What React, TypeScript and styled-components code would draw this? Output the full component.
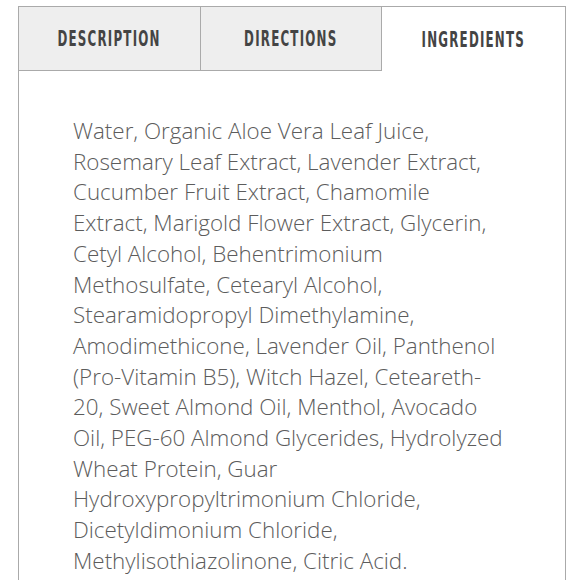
import React, { ReactElement, useState } from 'react';
import styled, { createGlobalStyle } from 'styled-components';

const GlobalStyle = createGlobalStyle`
  html, body {
    margin: 0;
    padding: 0;
    background: #ffffff;
  }
`;

const Page = styled.div`
  width: 580px;
  height: 580px;
  overflow: hidden;
  padding: 6px 0 0 18px;
  box-sizing: border-box;
  background: #ffffff;
`;

const Panel = styled.div`
  display: flex;
  flex-direction: column;
  width: 548px;
  height: 600px;
  border: 1px solid #aaaaaa;
  border-bottom: none;
  box-sizing: border-box;
`;

const TabBar = styled.div`
  display: grid;
  grid-template-columns: 182px 181px 183px;
  height: 64px;
`;

const Tab = styled.button<{ $active: boolean }>`
  display: flex;
  align-items: center;
  justify-content: center;
  margin: 0;
  padding: 0;
  border: none;
  border-right: ${(p) => (p.$active ? 'none' : '1px solid #aaaaaa')};
  border-bottom: ${(p) => (p.$active ? 'none' : '1px solid #aaaaaa')};
  background: ${(p) => (p.$active ? '#ffffff' : '#eeeeee')};
  cursor: pointer;
`;

const TabLabel = styled.span`
  display: inline-block;
  color: #444444;
  font-family: 'DejaVu Sans Condensed', 'DejaVu Sans', sans-serif;
  font-weight: bold;
  font-size: 22px;
  letter-spacing: 2px;
  transform: scaleX(0.6);
  white-space: nowrap;
`;

const Body = styled.div`
  padding: 45px 20px 0 54px;
`;

const Ingredients = styled.p`
  margin: 0;
  font-family: 'Open Sans', sans-serif;
  font-weight: 300;
  font-size: 22.4px;
  line-height: 30.7px;
  color: #5c5c5c;
  white-space: pre-line;
`;

type TabKey = 'DESCRIPTION' | 'DIRECTIONS' | 'INGREDIENTS';

const TABS: TabKey[] = ['DESCRIPTION', 'DIRECTIONS', 'INGREDIENTS'];

const INGREDIENT_LINES = [
  'Water, Organic Aloe Vera Leaf Juice,',
  'Rosemary Leaf Extract, Lavender Extract,',
  'Cucumber Fruit Extract, Chamomile',
  'Extract, Marigold Flower Extract, Glycerin,',
  'Cetyl Alcohol, Behentrimonium',
  'Methosulfate, Cetearyl Alcohol,',
  'Stearamidopropyl Dimethylamine,',
  'Amodimethicone, Lavender Oil, Panthenol',
  '(Pro-Vitamin B5), Witch Hazel, Ceteareth-',
  '20, Sweet Almond Oil, Menthol, Avocado',
  'Oil, PEG-60 Almond Glycerides, Hydrolyzed',
  'Wheat Protein, Guar',
  'Hydroxypropyltrimonium Chloride,',
  'Dicetyldimonium Chloride,',
  'Methylisothiazolinone, Citric Acid.',
];

function App(): ReactElement {
  const [selected, setSelected] = useState<TabKey>('INGREDIENTS');

  return (
    <Page>
      <GlobalStyle />
      <Panel>
        <TabBar>
          {TABS.map((key) => (
            <Tab key={key} $active={selected === key} onClick={(): void => setSelected(key)}>
              <TabLabel>{key}</TabLabel>
            </Tab>
          ))}
        </TabBar>
        <Body>
          <Ingredients>{INGREDIENT_LINES.join('\n')}</Ingredients>
        </Body>
      </Panel>
    </Page>
  );
}

export default App;
